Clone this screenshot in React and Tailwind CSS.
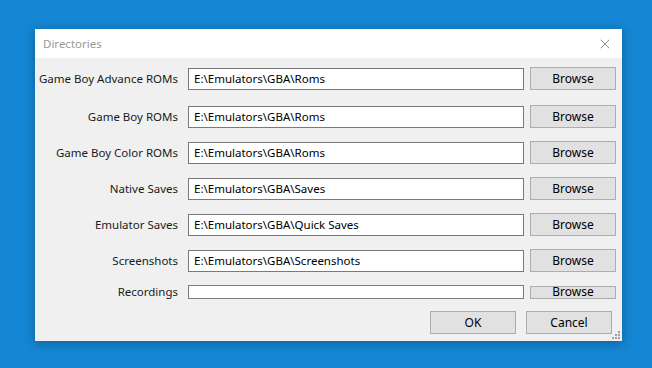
import { X } from 'lucide-react'

const ROWS = [
  { label: 'Game Boy Advance ROMs', value: 'E:\\Emulators\\GBA\\Roms' },
  { label: 'Game Boy ROMs', value: 'E:\\Emulators\\GBA\\Roms' },
  { label: 'Game Boy Color ROMs', value: 'E:\\Emulators\\GBA\\Roms' },
  { label: 'Native Saves', value: 'E:\\Emulators\\GBA\\Saves' },
  { label: 'Emulator Saves', value: 'E:\\Emulators\\GBA\\Quick Saves' },
  { label: 'Screenshots', value: 'E:\\Emulators\\GBA\\Screenshots' },
]

function Row({ label, value, compact }) {
  return (
    <div className={`flex items-center ${compact ? 'h-[14px]' : 'h-[23px]'}`}>
      <div className="w-[153px] shrink-0 whitespace-nowrap pr-[10px] text-right text-[11.5px] text-[#1a1a1a]">
        {label}
      </div>
      <div
        className={`flex w-[336px] shrink-0 items-center whitespace-nowrap border border-[#7a7a7a] bg-white px-[5px] text-[11.5px] text-black ${
          compact ? 'h-[14px]' : 'h-[22px]'
        }`}
      >
        {value}
      </div>
      <button
        className={`ml-[6px] flex w-[86px] shrink-0 items-center justify-center border border-[#adadad] bg-[#e1e1e1] text-[12px] text-black ${
          compact ? 'h-[13px] leading-none' : 'h-[23px]'
        }`}
      >
        Browse
      </button>
    </div>
  )
}

export default function App() {
  return (
    <div
      className="h-[368px] w-[652px] overflow-hidden bg-[#1586d3] pl-[35px] pt-[29px]"
      style={{ fontFamily: '"Noto Sans", "Open Sans", sans-serif' }}
    >
      <div className="relative flex h-[312px] w-[587px] flex-col bg-[#f0f0f0] shadow-[0_2px_10px_rgba(0,0,0,0.3)]">
        <div className="flex h-[29px] items-center justify-between bg-white pl-[8px] pr-[9px]">
          <span className="text-[11.5px] text-[#999999]">Directories</span>
          <X size={16} strokeWidth={1} color="#555" />
        </div>
        <div className="flex flex-col pt-[9px]">
          <div className="flex flex-col gap-[13px]">
            {ROWS.map((r, i) => (
              <div key={r.label} className={i === 1 ? 'mt-[2px]' : ''}>
                <Row {...r} />
              </div>
            ))}
            <Row label="Recordings" value="" compact />
          </div>
          <div className="mt-[12px] flex gap-[10px] pl-[395px]">
            <button className="flex h-[23px] w-[86px] items-center justify-center border border-[#adadad] bg-[#e1e1e1] text-[12px] text-black">
              OK
            </button>
            <button className="flex h-[23px] w-[86px] items-center justify-center border border-[#adadad] bg-[#e1e1e1] text-[12px] text-black">
              Cancel
            </button>
          </div>
        </div>
        <svg className="absolute bottom-[2px] right-[2px]" width="8" height="8" viewBox="0 0 8 8">
          <g fill="#a0a0a0">
            <rect x="6" y="0" width="2" height="2" />
            <rect x="3" y="3" width="2" height="2" />
            <rect x="6" y="3" width="2" height="2" />
            <rect x="0" y="6" width="2" height="2" />
            <rect x="3" y="6" width="2" height="2" />
            <rect x="6" y="6" width="2" height="2" />
          </g>
        </svg>
      </div>
    </div>
  )
}
